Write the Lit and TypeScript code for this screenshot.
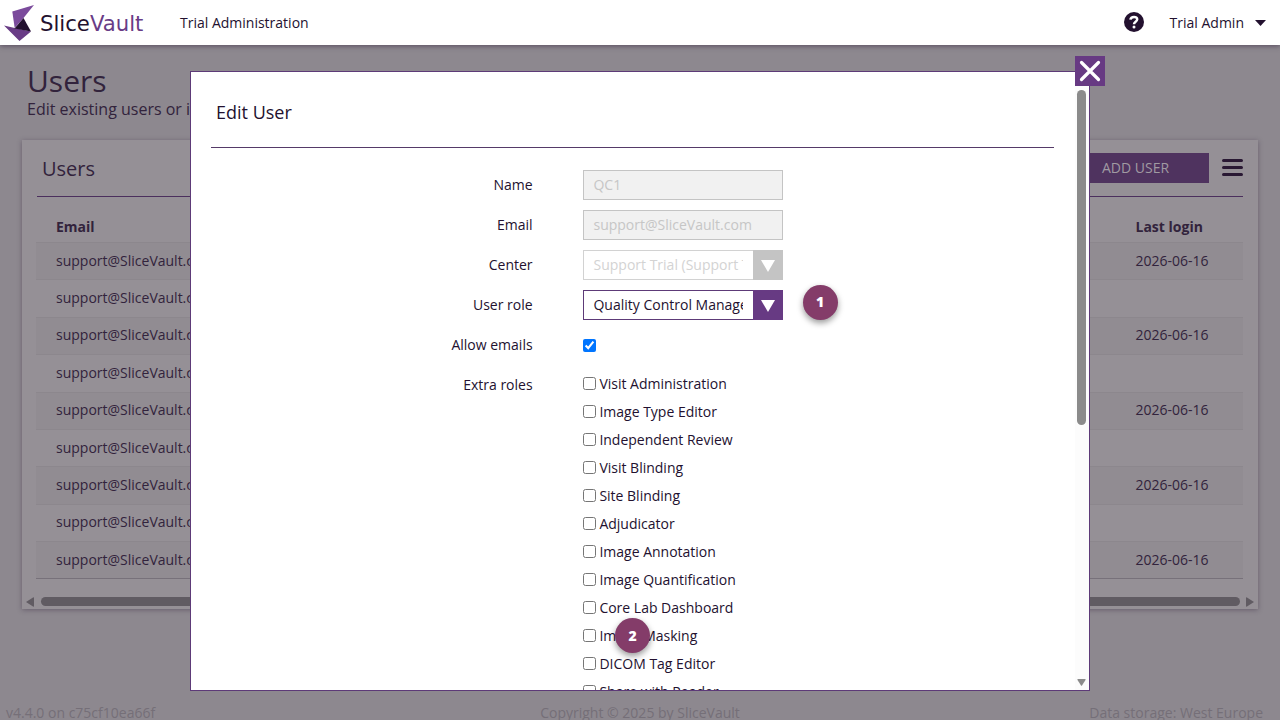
import { LitElement, html, css } from "lit";
import { customElement } from "lit/decorators.js";
import { classMap } from "lit/directives/class-map.js";

const LOGINS = [true, false, true, false, true, false, true, false, true];
const EXTRA_ROLES = [
  "Visit Administration",
  "Image Type Editor",
  "Independent Review",
  "Visit Blinding",
  "Site Blinding",
  "Adjudicator",
  "Image Annotation",
  "Image Quantification",
  "Core Lab Dashboard",
  "Image Masking",
  "DICOM Tag Editor",
  "Share with Reader",
];

@customElement("top-bar")
class TopBar extends LitElement {
  static styles = css`
    :host {
      display: flex;
      align-items: center;
      height: 45px;
      background: #fff;
      color: #23112f;
      font-size: 14px;
      box-shadow: 0 1px 5px rgba(35, 17, 47, 0.5);
      position: relative;
      box-sizing: border-box;
      padding: 0 14px 0 4px;
    }
    .mark { width: 31px; height: 39px; display: block; }
    .brand {
      font-family: "DejaVu Sans", sans-serif;
      font-size: 21.200px;
      line-height: 30px;
      margin-left: 5px;
      padding-top: 2px;
      width: 140px;
      white-space: nowrap;
    }
    .accent { color: #693c86; }
    .grow { flex: 1; }
    .help { display: block; width: 20px; height: 20px; margin-right: 26px; margin-top: -1px; }
    .caret { display: block; width: 11px; height: 6px; margin-left: 11px; }
  `;
  render() {
    return html`
      <svg class="mark" viewBox="0 0 31 39">
        <path fill="#7b4b9c" d="M8.300 8.500 L30 2 L19.500 15 L10.700 25 Z" />
        <path fill="#693c86" d="M0 22.500 L10.700 25 L27 28.500 L15.500 38 Z" />
        <path fill="#23112f" d="M19.500 15 L10.500 25.500 L27 28.500 Z" />
      </svg>
      <span class="brand">Slice<span class="accent">Vault</span></span>
      <span>Trial Administration</span>
      <span class="grow"></span>
      <svg class="help" viewBox="0 0 20 20">
        <circle cx="10" cy="10" r="10" fill="#23112f" />
        <path d="M6.400 7.600 C6.900 3.900 13.400 4.100 13.200 7.500 C13 9.800 10 9.700 10 12.200" fill="none" stroke="#fff" stroke-width="2.500" />
        <circle cx="10" cy="14.900" r="1.500" fill="#fff" />
      </svg>
      <span>Trial Admin</span>
      <svg class="caret" viewBox="0 0 11 6"><path d="M0 0H11L5.500 6Z" fill="#23112f" /></svg>
    `;
  }
}

@customElement("users-page")
class UsersPage extends LitElement {
  static styles = css`
    :host {
      display: flex;
      flex-direction: column;
      flex: 1;
      color: #32233c;
      font-size: 14px;
      background: #8d888f;
      min-height: 0;
    }
    .heading { padding: 15px 27px 0; height: 80px; }
    .title { font-size: 30px; line-height: 41px; }
    .sub { font-size: 16px; line-height: 16px; }
    .card {
      margin: 0 22px;
      height: 469px;
      box-sizing: border-box;
      padding: 0 15px;
      background: #959096;
      box-shadow: 0 1px 5px rgba(35, 17, 47, 0.35);
      display: flex;
      flex-direction: column;
    }
    .bar {
      display: flex;
      align-items: center;
      height: 56px;
      border-bottom: 1px solid #4b2f5d;
    }
    .name { font-size: 20px; flex: 1; padding-left: 5px; }
    .add {
      width: 147px;
      height: 30px;
      line-height: 30px;
      text-align: center;
      background: #4f335f;
      color: #a09aa2;
    }
    .menu { width: 21px; height: 17px; margin: -1px 0 0 13px; display: block; }
    .row {
      display: grid;
      grid-template-columns: 1079.500px 1fr;
      align-items: center;
      height: 37.400px;
      padding: 0 20px 2px;
      box-sizing: border-box;
      border-top: 1px solid #8c878d;
    }
    .odd { background: #918c92; }
    .head { font-weight: 700; height: 45px; padding-top: 15px; border: 0; }
    .table {
      margin-left: -1px;
      border-bottom: 1px solid #77717a;
      height: 381px;
      overflow: hidden;
    }
    .scroll {
      display: flex;
      align-items: center;
      height: 13px;
      margin: 16px -11px 0 -11px;
      gap: 7px;
    }
    .arrow { width: 8px; height: 10px; display: block; }
    .thumb { flex: 1; height: 9px; border-radius: 5px; background: #605b62; margin-right: -1px; }
    .foot {
      display: grid;
      grid-template-columns: 1fr auto 1fr;
      margin-top: auto;
      height: 17px;
      line-height: 19px;
      color: #756f78;
    }
    .start { padding-left: 6px; }
    .end { text-align: right; padding-right: 17px; }
  `;
  render() {
    return html`
      <div class="heading">
        <div class="title">Users</div>
        <div class="sub">Edit existing users or invite new users</div>
      </div>
      <section class="card">
        <div class="bar">
          <span class="name">Users</span>
          <span class="add">ADD USER</span>
          <svg class="menu" viewBox="0 0 21 17">
            <path d="M1.500 1.500H19.500M1.500 8.500H19.500M1.500 15.500H19.500" stroke="#291833" stroke-width="3" stroke-linecap="round" />
          </svg>
        </div>
        <div class="table">
          <div class="row head"><span>Email</span><span>Last login</span></div>
          ${LOGINS.map(
            (seen, i) => html`<div class=${classMap({ row: true, odd: i % 2 === 0 })}>
              <span>support@SliceVault.com</span><span>${seen ? "2026-06-16" : ""}</span>
            </div>`
          )}
        </div>
        <div class="scroll">
          <svg class="arrow" viewBox="0 0 8 10"><path d="M8 1V9Q8 10 7 9.500L0 5L7 .5Q8 0 8 1Z" fill="#605b62" /></svg>
          <span class="thumb"></span>
          <svg class="arrow" viewBox="0 0 8 10"><path d="M0 1V9Q0 10 1 9.500L8 5L1 .5Q0 0 0 1Z" fill="#605b62" /></svg>
        </div>
      </section>
      <footer class="foot">
        <span class="start">v4.4.0 on c75cf10ea66f</span>
        <span>Copyright © 2025 by SliceVault</span>
        <span class="end">Data storage: West Europe</span>
      </footer>
    `;
  }
}

@customElement("edit-user-dialog")
class EditUserDialog extends LitElement {
  static styles = css`
    :host {
      position: absolute;
      left: 190px;
      top: 71px;
      width: 900px;
      height: 620px;
      box-sizing: border-box;
      border: 1px solid #5d3a78;
      background: #fff;
      color: #23112f;
      font-size: 14px;
      display: flex;
    }
    .body { flex: 1; overflow: hidden; padding: 0 21px 0 20px; }
    .title {
      font-size: 18px;
      height: 75px;
      line-height: 81px;
      padding-left: 5px;
      border-bottom: 1px solid #553a68;
      margin-bottom: 17px;
    }
    .line {
      display: grid;
      grid-template-columns: 321.600px 200px;
      column-gap: 50.400px;
      height: 40px;
      align-items: center;
    }
    .label { text-align: right; line-height: 40px; }
    .input {
      box-sizing: border-box;
      height: 30px;
      line-height: 28px;
      padding-left: 9.500px;
      border: 1px solid #c4c4c4;
      background: #f1f1f1;
      color: #c6c6c6;
    }
    .select {
      display: flex;
      box-sizing: border-box;
      height: 30px;
      line-height: 28px;
      border: 1px solid #5d3a78;
    }
    .value {
      width: 149.500px;
      margin: 0 10px 0 9.500px;
      overflow: hidden;
      white-space: nowrap;
      flex: none;
    }
    .drop {
      width: 30px;
      flex: none;
      height: 30px;
      margin: -1px -1px -1px 0;
      background: #673a83;
      display: grid;
      place-items: center;
    }
    .tri { display: block; width: 14px; height: 12px; margin-top: 1px; }
    .off { border-color: #d2d2d2; color: #d3d3d3; }
    .off .drop { background: #c4c4c4; }
    .check { display: block; width: 13px; height: 13px; margin: 0; }
    .roles { align-items: start; height: auto; }
    .list { padding-top: 4px; }
    .role { display: flex; align-items: center; gap: 3.400px; height: 28px; white-space: nowrap; }
    .track {
      width: 14px;
      background: #fcfcfc;
      display: flex;
      flex-direction: column;
      align-items: center;
      padding: 18px 1px 4px 0;
      box-sizing: border-box;
      justify-content: space-between;
    }
    .thumb { width: 9px; height: 335px; border-radius: 5px; background: #8b8b8b; }
    .down { width: 9px; height: 7px; display: block; }
    .close {
      position: absolute;
      right: -16px;
      top: -16px;
      width: 30px;
      height: 30px;
      background: #673a83;
    }
    .badge {
      position: absolute;
      width: 35px;
      height: 35px;
      line-height: 34px;
      border-radius: 50%;
      background: #843c69;
      color: #fff;
      font-weight: 800;
      text-align: center;
      box-shadow: 0 3px 6px rgba(0, 0, 0, 0.4);
    }
    .one { left: 612px; top: 213px; text-indent: -1px; }
    .two { left: 424px; top: 546px; line-height: 36px; }
  `;
  select(value: string, off: boolean) {
    return html`<div class=${classMap({ select: true, off })}>
      <span class="value">${value}</span>
      <span class="drop"><svg class="tri" viewBox="0 0 14 12"><path d="M0 0H14L7 12Z" fill="#fff" /></svg></span>
    </div>`;
  }
  render() {
    return html`
      <div class="body">
        <div class="title">Edit User</div>
        <div class="line"><span class="label">Name</span><div class="input">QC1</div></div>
        <div class="line"><span class="label">Email</span><div class="input">support@SliceVault.com</div></div>
        <div class="line"><span class="label">Center</span>${this.select("Support Trial (Support Trial)", true)}</div>
        <div class="line"><span class="label">User role</span>${this.select("Quality Control Manager", false)}</div>
        <div class="line"><span class="label">Allow emails</span><input class="check" type="checkbox" checked /></div>
        <div class="line roles">
          <span class="label">Extra roles</span>
          <div class="list">
            ${EXTRA_ROLES.map(
              (role) => html`<label class="role"><input class="check" type="checkbox" />${role}</label>`
            )}
          </div>
        </div>
      </div>
      <div class="track">
        <span class="thumb"></span>
        <svg class="down" viewBox="0 0 9 7"><path d="M1 0H8Q9 0 8.500 1L5 6.500Q4.500 7 4 6.500L.5 1Q0 0 1 0Z" fill="#8b8b8b" /></svg>
      </div>
      <svg class="close" viewBox="0 0 30 30">
        <path d="M6.500 6.500L23.500 23.500M23.500 6.500L6.500 23.500" stroke="#fff" stroke-width="3.200" stroke-linecap="round" />
      </svg>
      <span class="badge one">1</span>
      <span class="badge two">2</span>
    `;
  }
}

@customElement("app-root")
class AppRoot extends LitElement {
  static styles = css`
    :host {
      display: flex;
      flex-direction: column;
      position: relative;
      width: 1280px;
      height: 720px;
      overflow: hidden;
      font-family: "Open Sans", sans-serif;
    }
    .top { z-index: 1; flex: none; }
    .dialog { z-index: 2; }
  `;
  render() {
    return html`
      <top-bar class="top"></top-bar>
      <users-page></users-page>
      <edit-user-dialog class="dialog"></edit-user-dialog>
    `;
  }
}
